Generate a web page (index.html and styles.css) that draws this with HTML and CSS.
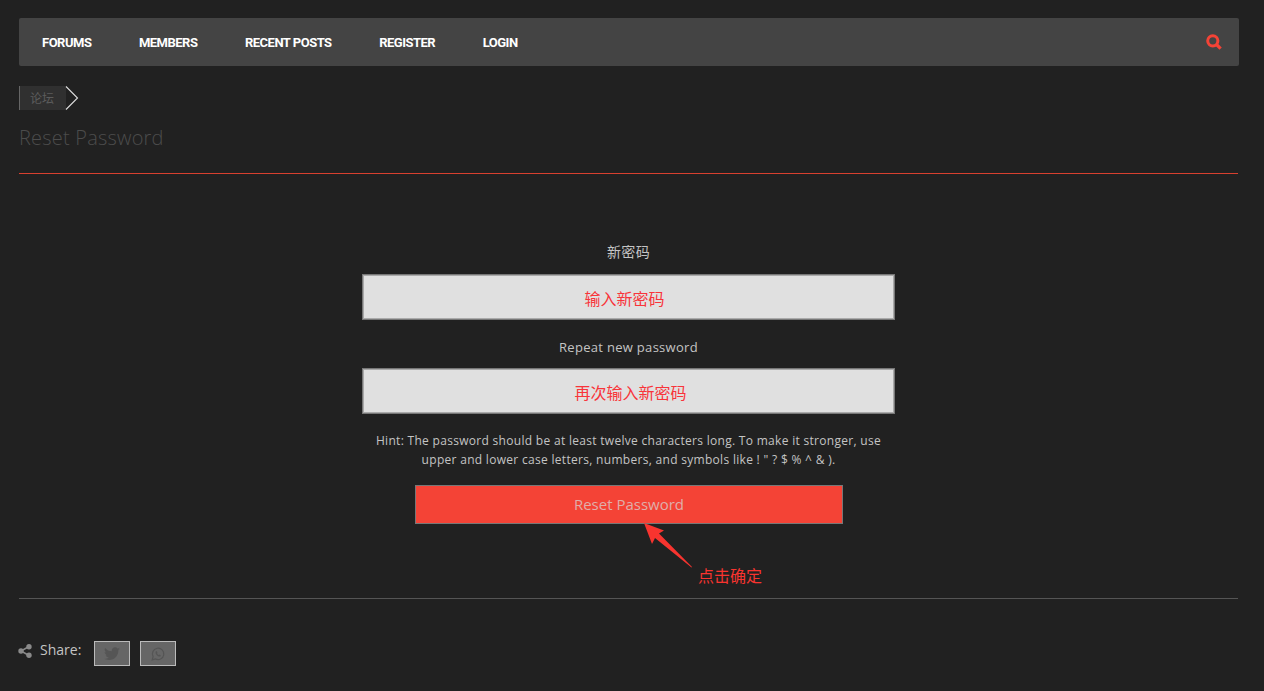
FILE: index.html
```html
<!DOCTYPE html>
<html lang="zh">
<head>
<meta charset="utf-8" />
<title>Reset Password</title>
<link rel="stylesheet" href="styles.css">
</head>
<body>
<div class="wrap">
  <div class="nav">
    <a href="#">FORUMS</a>
    <a href="#">MEMBERS</a>
    <a href="#">RECENT POSTS</a>
    <a href="#">REGISTER</a>
    <a href="#">LOGIN</a>
    <svg class="search" width="16" height="16" viewBox="0 0 16 16">
      <circle cx="6.8" cy="6.8" r="5.1" fill="none" stroke="#f44336" stroke-width="3"/>
      <path d="M10.5 10.5L14.6 14.6" stroke="#f44336" stroke-width="3.2" fill="none"/>
    </svg>
  </div>
  <div class="crumbs">
    <span class="crumb">论坛</span>
    <svg class="crumb-arrow" width="14" height="24" viewBox="0 0 14 24">
      <path d="M1 0.5L12.5 12L1 23.5" fill="none" stroke="#ddd" stroke-width="1.1"/>
    </svg>
  </div>
  <h1>Reset Password</h1>
  <hr class="line-top" />
  <div class="form">
    <label class="first">新密码</label>
    <div class="field field-first">输入新密码</div>
    <label class="second">Repeat new password</label>
    <div class="field field-second">再次输入新密码</div>
    <p class="hint">Hint: The password should be at least twelve characters long. To make it stronger, use upper and lower case letters, numbers, and symbols like ! " ? $ % ^ &amp; ).</p>
    <div class="btn-box">
      <a class="btn" href="#">Reset Password</a>
      <svg class="pointer" width="52" height="48" viewBox="0 0 52 48">
        <path d="M1 1L21 8.5L16 11.5L49 45L48.500 45.500L12 16L9 22Z" fill="#f8342f"/>
      </svg>
      <span class="note">点击确定</span>
    </div>
  </div>
  <hr class="line-bottom" />
  <div class="share">
    <svg class="share-icon" width="14" height="14" viewBox="0 0 14 14">
      <path d="M11 2.500L3 7L11 11.500" fill="none" stroke="#8a8a8a" stroke-width="1.500"/>
      <circle cx="3" cy="7" r="2.700" fill="#8a8a8a"/>
      <circle cx="11" cy="2.700" r="2.700" fill="#8a8a8a"/>
      <circle cx="11" cy="11.300" r="2.700" fill="#8a8a8a"/>
    </svg>
    <span class="share-label">Share:</span>
    <a class="share-btn" href="#">
      <svg width="16" height="14" viewBox="0 0 24 20">
        <path d="M24 2.400c-.9.400-1.800.7-2.800.8 1-.6 1.800-1.600 2.200-2.700-1 .6-2 1-3.100 1.200C19.300.7 18 0 16.600 0c-2.700 0-4.900 2.200-4.900 4.900 0 .4 0 .8.100 1.100C7.700 5.800 4.100 3.800 1.700.9c-.4.700-.7 1.600-.7 2.500 0 1.700.9 3.200 2.200 4.100-.8 0-1.600-.2-2.200-.6v.1c0 2.400 1.700 4.400 3.900 4.800-.4.100-.8.200-1.300.2-.3 0-.6 0-.9-.1.600 2 2.400 3.400 4.600 3.400-1.700 1.300-3.800 2.100-6.100 2.100-.4 0-.8 0-1.200-.1C2.200 18.300 4.800 19 7.500 19c9.100 0 14-7.500 14-14v-.6c1-.7 1.800-1.600 2.500-2z" fill="#555"/>
      </svg>
    </a>
    <a class="share-btn" href="#">
      <svg width="14" height="14" viewBox="0 0 14 14">
        <path d="M1.200 12.800L2.100 9.600A5.700 5.700 0 1 1 4.400 11.900Z" fill="none" stroke="#555" stroke-width="1.200"/>
        <path d="M5 4.200C4.200 5 4.500 6.500 5.700 7.900C7 9.300 8.600 9.900 9.500 9.200L9.900 8.400L8.500 7.600L7.900 8.200C7.200 7.900 6.400 7.100 6 6.300L6.500 5.700L5.800 4.200Z" fill="#555"/>
      </svg>
    </a>
  </div>
</div>
</body>
</html>
```

FILE: styles.css
```css
* {
	box-sizing: border-box;
}
body {
	margin: 0;
	background: #212121;
	color: #c4c4c4;
	font-family: "Open Sans", "Noto Sans CJK SC", sans-serif;
	font-size: 13px;
}
a {
	text-decoration: none;
}
.wrap {
	padding: 18px 25px 0 19px;
}

.nav {
	display: flex;
	align-items: center;
	gap: 47.5px;
	height: 48px;
	padding: 0 17px 0 23px;
	background: #444;
	border-radius: 2px;
}
.nav a {
	color: #fff;
	font-family: "Roboto", sans-serif;
	font-size: 13px;
	font-weight: 700;
	letter-spacing: -0.5px;
}
.search {
	margin-left: auto;
}

.crumbs {
	display: flex;
	align-items: center;
	height: 24px;
	margin-top: 20px;
}
.crumb {
	width: 47px;
	height: 24px;
	padding-left: 10px;
	line-height: 25px;
	font-size: 12px;
	color: #5c5c5c;
	background: #303030;
	border-left: 1px solid #666;
}
.crumb-arrow {
	margin-left: -1px;
}

h1 {
	margin: 16px 0 0;
	font-size: 20px;
	font-weight: 300;
	line-height: 24px;
	letter-spacing: 0.2px;
	color: #4c4c4c;
}
.line-top {
	margin: 23px 1px 0 0;
	border: 0;
	border-top: 1px solid #d8402f;
}

.form {
	display: flex;
	flex-direction: column;
	align-items: center;
	width: 533px;
	margin: 68px 0 0 343px;
	text-align: center;
}
.form label {
	line-height: 20px;
	letter-spacing: 0.3px;
}
.form .first {
	font-size: 14px;
}
.form .second {
	margin-top: 17px;
}
.field {
	width: 100%;
	height: 46px;
	margin-top: 12px;
	padding-top: 7px;
	line-height: 34px;
	font-size: 16px;
	color: #f8343a;
	background: #e0e0e0;
	border: 1px solid #777;
	box-shadow: inset 0 0 0 1px #aaa;
}
.field-first {
	padding-right: 8px;
}
.field-second {
	margin-top: 11px;
	padding-left: 4px;
}
.hint {
	width: 516px;
	margin: 17px 0 0;
	line-height: 19px;
	font-size: 12px;
	letter-spacing: 0.3px;
	color: #c4c4c4;
}
.btn-box {
	position: relative;
	align-self: flex-start;
	width: 428px;
	margin: 16px 0 0 53px;
}
.btn {
	display: block;
	height: 39px;
	line-height: 37px;
	font-size: 15px;
	color: #e0aeaa;
	background: #f44336;
	border: 1px solid #777;
}
.pointer {
	position: absolute;
	left: 228px;
	top: 37px;
}
.note {
	position: absolute;
	left: 283px;
	top: 78px;
	font-size: 16px;
	color: #f8342f;
	white-space: nowrap;
}

.line-bottom {
	margin: 74px 1px 0 0;
	border: 0;
	border-top: 1px solid #555;
}
.share {
	display: flex;
	align-items: center;
	margin-top: 41px;
}
.share-icon {
	margin: 0 0 6px -1px;
}
.share-label {
	margin: 0 0 8px 8px;
	font-size: 14px;
}
.share-btn {
	display: flex;
	align-items: center;
	justify-content: center;
	width: 36px;
	height: 25px;
	margin-left: 10px;
	background: #666;
	border: 1px solid #bbb;
}
.share-label + .share-btn {
	margin-left: 13px;
}
```
